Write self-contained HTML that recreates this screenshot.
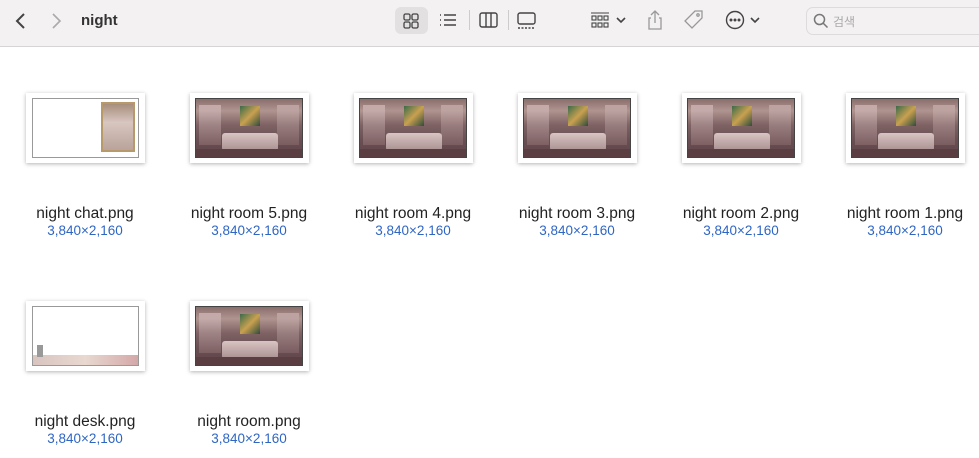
<!DOCTYPE html>
<html><head><meta charset="utf-8"><style>
*{margin:0;padding:0;box-sizing:border-box}
body{width:979px;height:458px;background:#fff;font-family:"Liberation Sans","Noto Sans CJK KR",sans-serif;position:relative;overflow:hidden}
.tb{position:absolute;left:0;top:0;width:979px;height:47px;background:#f3f1f2;border-bottom:1px solid #d6d4d5}
.ab{position:absolute}
.card{position:absolute;width:119px;height:70px;background:#fff;box-shadow:0 1px 4px rgba(0,0,0,.3)}
.room{position:absolute;left:5px;top:5px;width:108px;height:60px;border:1px solid #444;overflow:hidden;
background:linear-gradient(180deg,#8a6e6c 0%,#b09490 20%,#7e6264 45%,#6a5054 70%,#5e4448 100%)}
.room .art{position:absolute;left:44px;top:7px;width:20px;height:20px;background:linear-gradient(135deg,#3b6a4a,#c9a050,#2e4c3a)}
.room .bed{position:absolute;left:26px;top:34px;width:56px;height:18px;background:linear-gradient(#d8c4c2,#a89090);border-radius:3px}
.room .l{position:absolute;left:3px;top:6px;width:22px;height:40px;background:linear-gradient(#dcc6c6,#8e6e70);opacity:.6}
.room .r{position:absolute;right:3px;top:6px;width:22px;height:40px;background:linear-gradient(#d0b8b6,#86686a);opacity:.6}
.room .fl{position:absolute;left:0;bottom:0;width:100%;height:8px;background:#5a3e42}
.name{position:absolute;width:164px;text-align:center;font-size:15.5px;color:#222}
.dim{position:absolute;width:164px;text-align:center;font-size:13.5px;color:#2f66c4}
</style></head><body>
<div class="tb">
<svg class="ab" style="left:14px;top:12px" width="14" height="18"><path d="M10 2 L3 9 L10 16" stroke="#444" stroke-width="2" fill="none"/></svg>
<svg class="ab" style="left:50px;top:12px" width="14" height="18"><path d="M3 2 L10 9 L3 16" stroke="#aaa" stroke-width="1.6" fill="none"/></svg>
<div class="ab" style="left:81px;top:12px;font-size:15px;font-weight:bold;color:#333">night</div>
<div class="ab" style="left:395px;top:7px;width:33px;height:27px;background:#e2e0e1;border-radius:6px"></div>
<svg class="ab" style="left:403px;top:13px" width="16" height="16" fill="none" stroke="#444" stroke-width="1.3"><rect x="1" y="1" width="6" height="6" rx="1.5"/><rect x="9" y="1" width="6" height="6" rx="1.5"/><rect x="1" y="9" width="6" height="6" rx="1.5"/><rect x="9" y="9" width="6" height="6" rx="1.5"/></svg>
<svg class="ab" style="left:438px;top:13px" width="20" height="16" stroke="#444" stroke-width="1.4"><path d="M2 2h1M2 7h1M2 12h1M6 2h12M6 7h12M6 12h12"/></svg>
<div class="ab" style="left:469px;top:10px;width:1px;height:20px;background:#ccc"></div>
<svg class="ab" style="left:479px;top:11px" width="20" height="18" fill="none" stroke="#444" stroke-width="1.4"><rect x="1" y="2" width="17" height="14" rx="2"/><path d="M7 2v14M12 2v14"/></svg>
<div class="ab" style="left:508px;top:10px;width:1px;height:20px;background:#ccc"></div>
<svg class="ab" style="left:516px;top:11px" width="22" height="20" fill="none" stroke="#444" stroke-width="1.4"><rect x="2" y="2" width="17" height="11" rx="2"/><path d="M2 17h17" stroke-dasharray="2 1.5"/></svg>
<svg class="ab" style="left:590px;top:11px" width="22" height="20" fill="none" stroke="#444" stroke-width="1.1"><path d="M1 2h18"/><rect x="2" y="5" width="4" height="4"/><rect x="8" y="5" width="4" height="4"/><rect x="14" y="5" width="4" height="4"/><rect x="2" y="12" width="4" height="4"/><rect x="8" y="12" width="4" height="4"/><rect x="14" y="12" width="4" height="4"/></svg>
<svg class="ab" style="left:616px;top:16px" width="10" height="8"><path d="M1 2l4 4 4-4" stroke="#444" stroke-width="1.6" fill="none"/></svg>
<svg class="ab" style="left:646px;top:9px" width="18" height="22" fill="none" stroke="#999" stroke-width="1.3"><path d="M9 2v12M5 6l4-4 4 4M5 9H3v11h12V9h-2"/></svg>
<svg class="ab" style="left:683px;top:9px" width="22" height="22" fill="none" stroke="#999" stroke-width="1.3"><path d="M12 2h7v7L9 19 2 12z"/><circle cx="15" cy="6" r="1.2"/></svg>
<svg class="ab" style="left:725px;top:10px" width="20" height="20" fill="none" stroke="#444" stroke-width="1.4"><circle cx="10" cy="10" r="8.5"/><circle cx="6" cy="10" r=".8" fill="#444"/><circle cx="10" cy="10" r=".8" fill="#444"/><circle cx="14" cy="10" r=".8" fill="#444"/></svg>
<svg class="ab" style="left:750px;top:16px" width="10" height="8"><path d="M1 2l4 4 4-4" stroke="#444" stroke-width="1.6" fill="none"/></svg>
<div class="ab" style="left:806px;top:7px;width:180px;height:28px;border:1px solid #dddbdc;border-radius:7px;background:#f3f1f2"></div>
<svg class="ab" style="left:813px;top:13px" width="16" height="16" fill="none" stroke="#777" stroke-width="1.5"><circle cx="6.5" cy="6.5" r="5"/><path d="M10 10l4.5 4.5"/></svg>
<div class="ab" style="left:833px;top:13px;font-size:12px;color:#aaa">검색</div>
</div>

<div class="card" style="left:26px;top:93px"><div style="position:absolute;left:6px;top:5px;width:107px;height:60px;border:1px solid #999;background:#fff"><div style="position:absolute;left:68px;top:3px;width:34px;height:50px;background:linear-gradient(#a88f7c,#d8c6c0 40%,#b9a39a);border:2px solid #b89a6a"></div></div></div>
<div class="name" style="left:3px;top:205px">night chat.png</div><div class="dim" style="left:3px;top:223px">3,840×2,160</div>

<div class="card" style="left:190px;top:93px"><div class="room"><div class="l"></div><div class="r"></div><div class="art"></div><div class="bed"></div><div class="fl"></div></div></div>
<div class="name" style="left:167px;top:205px">night room 5.png</div><div class="dim" style="left:167px;top:223px">3,840×2,160</div>
<div class="card" style="left:354px;top:93px"><div class="room"><div class="l"></div><div class="r"></div><div class="art"></div><div class="bed"></div><div class="fl"></div></div></div>
<div class="name" style="left:331px;top:205px">night room 4.png</div><div class="dim" style="left:331px;top:223px">3,840×2,160</div>
<div class="card" style="left:518px;top:93px"><div class="room"><div class="l"></div><div class="r"></div><div class="art"></div><div class="bed"></div><div class="fl"></div></div></div>
<div class="name" style="left:495px;top:205px">night room 3.png</div><div class="dim" style="left:495px;top:223px">3,840×2,160</div>
<div class="card" style="left:682px;top:93px"><div class="room"><div class="l"></div><div class="r"></div><div class="art"></div><div class="bed"></div><div class="fl"></div></div></div>
<div class="name" style="left:659px;top:205px">night room 2.png</div><div class="dim" style="left:659px;top:223px">3,840×2,160</div>
<div class="card" style="left:846px;top:93px"><div class="room"><div class="l"></div><div class="r"></div><div class="art"></div><div class="bed"></div><div class="fl"></div></div></div>
<div class="name" style="left:823px;top:205px">night room 1.png</div><div class="dim" style="left:823px;top:223px">3,840×2,160</div>

<div class="card" style="left:26px;top:301px"><div style="position:absolute;left:6px;top:5px;width:107px;height:60px;border:1px solid #999;background:#fff"><div style="position:absolute;left:0;top:48px;width:105px;height:10px;background:linear-gradient(90deg,#d9c4c0,#e8d8d0,#d4a8a8)"></div><div style="position:absolute;left:4px;top:38px;width:6px;height:12px;background:#999"></div></div></div>
<div class="name" style="left:3px;top:413px">night desk.png</div><div class="dim" style="left:3px;top:431px">3,840×2,160</div>
<div class="card" style="left:190px;top:301px"><div class="room"><div class="l"></div><div class="r"></div><div class="art"></div><div class="bed"></div><div class="fl"></div></div></div>
<div class="name" style="left:167px;top:413px">night room.png</div><div class="dim" style="left:167px;top:431px">3,840×2,160</div>
</body></html>
